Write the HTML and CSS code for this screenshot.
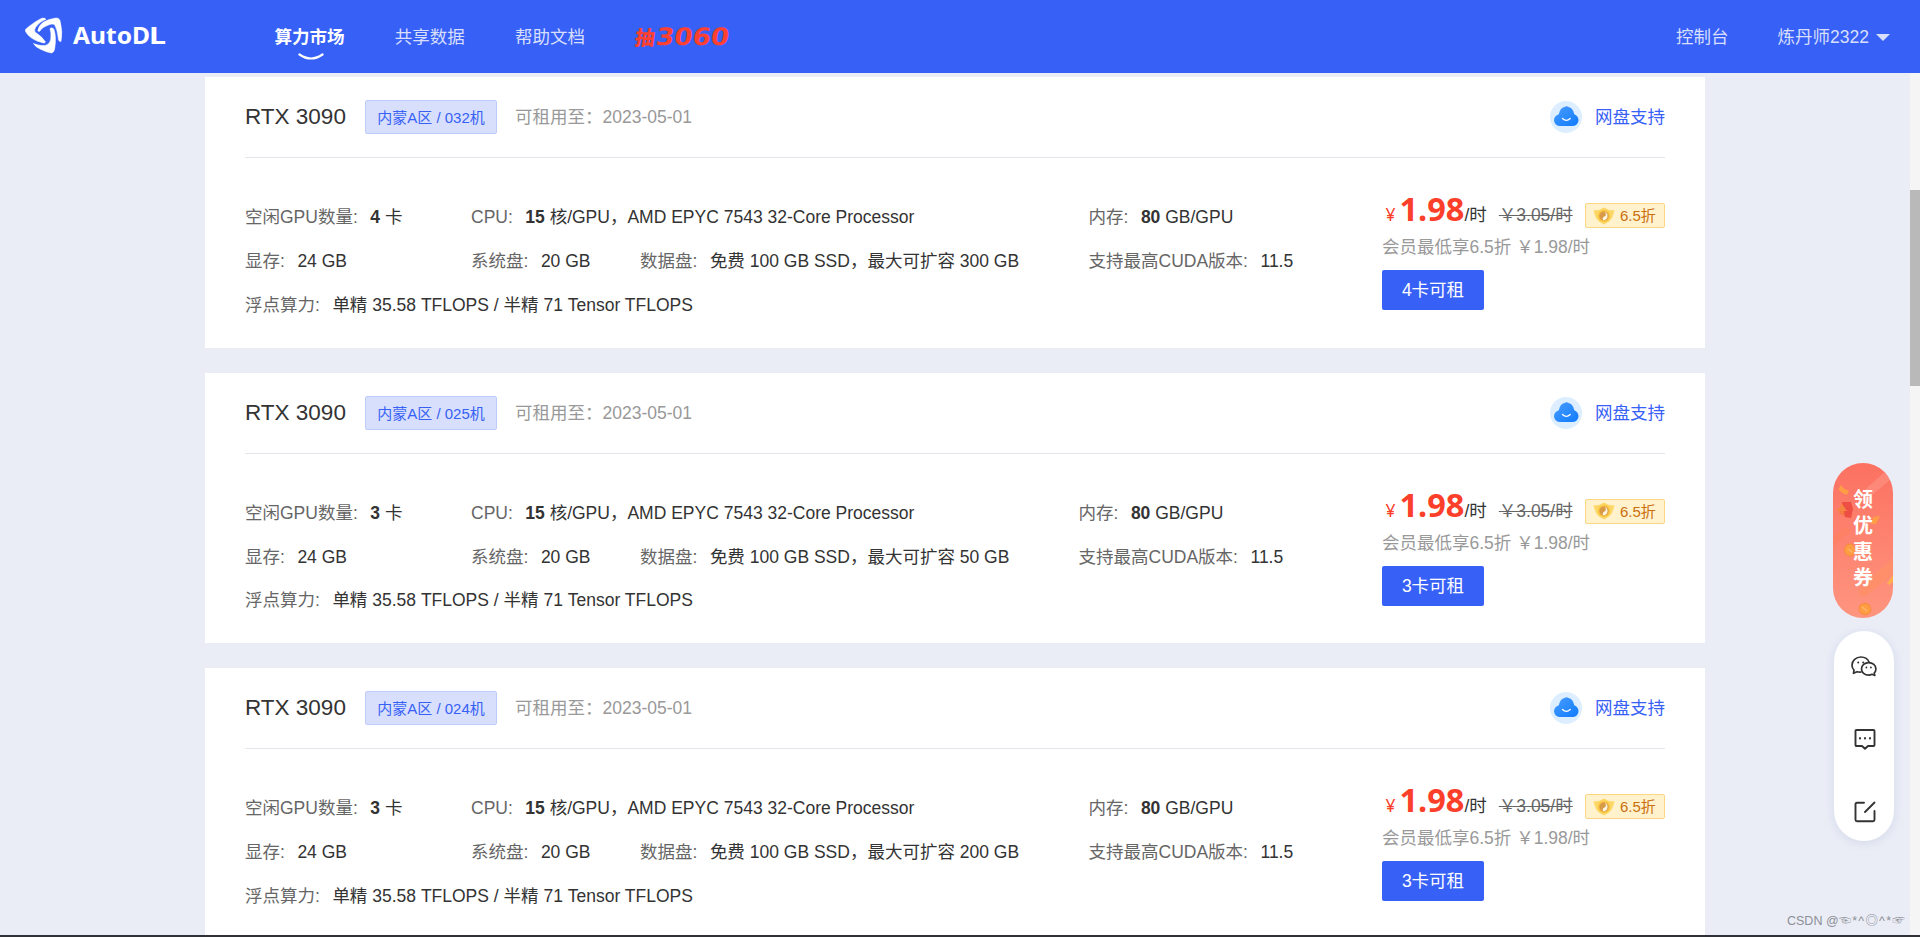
FILE: index.html
```html
<!DOCTYPE html>
<html lang="zh-CN">
<head>
<meta charset="utf-8">
<title>AutoDL</title>
<link rel="stylesheet" href="styles.css">
</head>
<body>
<svg class="defs" width="0" height="0">
  <defs>
    <linearGradient id="cloudFill" x1="0" y1="0" x2="1" y2="1"><stop offset="0" stop-color="#4a9dff"/><stop offset="1" stop-color="#0f7bff"/></linearGradient>
    <linearGradient id="couponFill" x1="0" y1="0" x2="0" y2="1"><stop offset="0" stop-color="#fc7161"/><stop offset="1" stop-color="#fe957f"/></linearGradient>
    <symbol id="cloud" viewBox="0 0 32 32">
      <circle cx="16" cy="16" r="16" fill="#dceeff"/>
      <path d="M9.500 25A5.800 5.800 0 0 1 4 19.200C4 16.200 6 14.200 8.800 13.200Q10 7 14.500 6Q16.500 4.300 18.500 6Q23 7 24.300 13.200C27 14.200 28.500 16.600 28.500 19.200A5.800 5.800 0 0 1 23 25Z" fill="url(#cloudFill)"/>
      <path d="M12.500 17.500Q16.300 21.300 20.200 17.500" fill="none" stroke="#fff" stroke-width="1.300" stroke-linecap="round"/>
    </symbol>
    <symbol id="medal" viewBox="0 0 22 18">
      <path d="M0.500 3.500L6 3L11 0.500L16 3L21.500 3.500L19 11L16 14.500L11 17.500L6 14.500L3 11Z" fill="#fcd765"/>
      <circle cx="11" cy="9" r="6" fill="#f9c23e"/>
      <circle cx="11" cy="9" r="4.600" fill="#d99a48"/>
      <path d="M12 5A4.300 4.300 0 0 1 10 13.200Q9 10.500 11.500 9.500Q14 8.500 12 5Z" fill="#fff6e0"/>
    </symbol>
  </defs>
</svg>

<header class="topbar">
  <svg class="logo" width="150" height="44" viewBox="0 0 150 44">
    <g fill="#fff" stroke="#fff" stroke-width=".5" stroke-linejoin="round">
      <path d="M.3 17C1 15 14 6 17 5.200Q20 4.800 21 6.300Q14 9 10.500 14.500Q9 17 10 19Q17 23.500 20.500 29Q20 30.300 17.500 29.800Q5 26.500 .8 19Q.3 18 .3 17Z"/>
      <path d="M12.800 18Q14 7.500 31 5Q34 4.500 35 7.500Q38 19 36 28.500Q34.500 29 33.500 27Q32.500 17 29.500 11.500Q27 10.500 23.500 12Q17 14 14.500 18.500Z"/>
      <path d="M8.500 30.500Q16 33.500 21 32.200Q25 31 25.800 26Q26.500 20 25 15.500Q27.500 13.500 29 16.500Q31.500 24 29.800 35Q29.300 39.500 26.500 40Q22 39.500 15 36Q10 33.500 8.500 30.500Z"/>
    </g>
    <text class="logo-text" x="48" y="31" textLength="77" lengthAdjust="spacingAndGlyphs">AutoD</text>
    <text class="logo-text" x="124" y="31" textLength="17" lengthAdjust="spacingAndGlyphs">L</text>
  </svg>
  <nav class="nav">
    <a class="nav-item active">算力市场
      <svg class="smile" width="26" height="8" viewBox="0 0 26 8"><path d="M1.500 1.500Q13 9.500 24.500 1.500" fill="none" stroke="#fff" stroke-width="2.200" stroke-linecap="round"/></svg>
    </a>
    <a class="nav-item">共享数据</a>
    <a class="nav-item">帮助文档</a>
    <a class="promo"><svg width="100" height="26" viewBox="0 0 100 26"><g transform="skewX(-8)"><text class="promo-cn" x="3" y="20.500" textLength="20" lengthAdjust="spacingAndGlyphs">抽</text><text class="promo-num" x="24" y="21" textLength="73" lengthAdjust="spacingAndGlyphs">3060</text></g></svg></a>
  </nav>
  <div class="account">
    <a>控制台</a>
    <a class="user">炼丹师2322<i class="caret"></i></a>
  </div>
</header>

<div class="page">
  <main class="list">
    <section class="card">
      <div class="card-head">
        <h2>RTX 3090</h2><span class="tag">内蒙A区 / 032机</span><span class="until">可租用至：2023-05-01</span>
        <a class="disk"><svg width="32" height="32"><use href="#cloud"/></svg>网盘支持</a>
      </div>
      <div class="card-body">
        <div class="specs">
          <div class="col"><p><label>空闲GPU数量:</label><b>4</b> 卡</p><p><label>显存:</label>24 GB</p><p><label>浮点算力:</label>单精 35.58 TFLOPS / 半精 71 Tensor TFLOPS</p></div>
          <div class="col"><p><label>CPU:</label><b>15</b> 核/GPU，AMD EPYC 7543 32-Core Processor</p><p><span class="sys"><label>系统盘:</label>20 GB</span><label>数据盘:</label>免费 100 GB SSD，最大可扩容 300 GB</p></div>
          <div class="col"><p><label>内存:</label><b>80</b> GB/GPU</p><p><label>支持最高CUDA版本:</label>11.5</p></div>
        </div>
        <div class="price">
          <div class="price-row"><span class="yen">¥</span><strong>1.98</strong><span class="unit">/时</span><del>￥3.05/时</del><span class="off"><svg width="22" height="18"><use href="#medal"/></svg>6.5折</span></div>
          <div class="member">会员最低享6.5折 ￥1.98/时</div>
          <button>4卡可租</button>
        </div>
      </div>
    </section>

    <section class="card">
      <div class="card-head">
        <h2>RTX 3090</h2><span class="tag">内蒙A区 / 025机</span><span class="until">可租用至：2023-05-01</span>
        <a class="disk"><svg width="32" height="32"><use href="#cloud"/></svg>网盘支持</a>
      </div>
      <div class="card-body">
        <div class="specs narrow">
          <div class="col"><p><label>空闲GPU数量:</label><b>3</b> 卡</p><p><label>显存:</label>24 GB</p><p><label>浮点算力:</label>单精 35.58 TFLOPS / 半精 71 Tensor TFLOPS</p></div>
          <div class="col"><p><label>CPU:</label><b>15</b> 核/GPU，AMD EPYC 7543 32-Core Processor</p><p><span class="sys"><label>系统盘:</label>20 GB</span><label>数据盘:</label>免费 100 GB SSD，最大可扩容 50 GB</p></div>
          <div class="col"><p><label>内存:</label><b>80</b> GB/GPU</p><p><label>支持最高CUDA版本:</label>11.5</p></div>
        </div>
        <div class="price">
          <div class="price-row"><span class="yen">¥</span><strong>1.98</strong><span class="unit">/时</span><del>￥3.05/时</del><span class="off"><svg width="22" height="18"><use href="#medal"/></svg>6.5折</span></div>
          <div class="member">会员最低享6.5折 ￥1.98/时</div>
          <button>3卡可租</button>
        </div>
      </div>
    </section>

    <section class="card">
      <div class="card-head">
        <h2>RTX 3090</h2><span class="tag">内蒙A区 / 024机</span><span class="until">可租用至：2023-05-01</span>
        <a class="disk"><svg width="32" height="32"><use href="#cloud"/></svg>网盘支持</a>
      </div>
      <div class="card-body">
        <div class="specs">
          <div class="col"><p><label>空闲GPU数量:</label><b>3</b> 卡</p><p><label>显存:</label>24 GB</p><p><label>浮点算力:</label>单精 35.58 TFLOPS / 半精 71 Tensor TFLOPS</p></div>
          <div class="col"><p><label>CPU:</label><b>15</b> 核/GPU，AMD EPYC 7543 32-Core Processor</p><p><span class="sys"><label>系统盘:</label>20 GB</span><label>数据盘:</label>免费 100 GB SSD，最大可扩容 200 GB</p></div>
          <div class="col"><p><label>内存:</label><b>80</b> GB/GPU</p><p><label>支持最高CUDA版本:</label>11.5</p></div>
        </div>
        <div class="price">
          <div class="price-row"><span class="yen">¥</span><strong>1.98</strong><span class="unit">/时</span><del>￥3.05/时</del><span class="off"><svg width="22" height="18"><use href="#medal"/></svg>6.5折</span></div>
          <div class="member">会员最低享6.5折 ￥1.98/时</div>
          <button>3卡可租</button>
        </div>
      </div>
    </section>
  </main>
  <div class="scrollbar"><div class="thumb"></div></div>
</div>
<div class="bottom-edge"></div>

<aside class="floating">
  <div class="coupon">
    <svg class="coupon-art" width="60" height="155" viewBox="0 0 60 155">
      <rect width="60" height="155" rx="30" fill="url(#couponFill)"/>
      <path d="M28 30L52 9L57 17L38 33Z" fill="#ff9485" opacity=".6"/>
      <path d="M0 73L10 65Q17 63 17 69L0 84Z" fill="#fe8065"/>
      <path d="M26 126L60 95V111L34 132Q26 137 26 126Z" fill="#ff8f6b"/>
      <path d="M8 22Q12 28 16 27L14 32Q8 30 5.500 26Z" fill="#ff9d45"/>
      <path d="M9 39L20 44L15 55L6 50Z" fill="#f47b42"/>
      <path d="M9 39L18 39L20 46L18 55L12 54Z" fill="#ee4f45"/>
      <path d="M9 41L14 48L4 48Z" fill="#f78542"/>
      <path d="M40 54L47 53L43 61L38 61Z" fill="#ff9c45"/>
      <path d="M60 112L54 120L56 122L60 119Z" fill="#ffad50"/>
      <g fill="#ff9d45" stroke="#f78c38"><ellipse cx="17" cy="87" rx="5.500" ry="6"/><ellipse cx="32" cy="146" rx="6" ry="5.500" transform="rotate(35 32 146)"/></g>
      <path d="M15 86L19 89M29 144L34 148" stroke="#ffb865" stroke-width="1.500"/>
    </svg>
    <span class="coupon-text">领优惠券</span>
  </div>
  <div class="tools">
    <svg width="26" height="21" viewBox="0 0 26 21" fill="none" stroke="#333" stroke-width="1.700" stroke-linejoin="round">
      <path d="M10.500 16Q8.500 16.400 6 15.700L2.500 17.300L3 14C1.700 12.800 1 11.200 1 9.200C1 4.700 5 1 9.900 1C13.800 1 17 3 18.300 6.500"/>
      <path d="M23.800 19.500L21 18.300C19.800 19 18.800 19.200 17.700 19.200C13.700 19.200 10.500 16.400 10.500 12.900S13.700 6.600 17.700 6.600S24.900 9.400 24.900 12.900C24.900 14.500 24.300 15.900 23.200 17Z"/>
      <g fill="#333" stroke="none"><circle cx="7.200" cy="6.500" r="1"/><circle cx="12.200" cy="6.500" r="1"/><circle cx="15.400" cy="11.500" r=".9"/><circle cx="19.900" cy="11.500" r=".9"/></g>
    </svg>
    <svg class="chat" width="22" height="21" viewBox="0 0 22 21" fill="none" stroke="#333" stroke-width="1.900" stroke-linejoin="round">
      <path d="M2.500 1H19.500Q20.500 1 20.500 2V16Q20.500 17 19.500 17H14L11 19.700L8 17H2.500Q1.500 17 1.500 16V2Q1.500 1 2.500 1Z"/>
      <g fill="#333" stroke="none"><rect x="5" y="8.300" width="2" height="2"/><rect x="10" y="8.300" width="2" height="2"/><rect x="15" y="8.300" width="2" height="2"/></g>
    </svg>
    <svg class="chat" width="22" height="22" viewBox="0 0 22 22" fill="none" stroke="#333" stroke-width="1.900" stroke-linecap="round">
      <path d="M10 1.800H3Q1.500 1.800 1.500 3.300V18.700Q1.500 20.200 3 20.200H19Q20.500 20.200 20.500 18.700V10M11 11L20.500 1.500"/>
    </svg>
  </div>
</aside>
<div class="watermark">CSDN @<span>☜*^◎^*☞</span></div>
</body>
</html>
```

FILE: styles.css
```css
* { box-sizing: border-box; }
html, body { height: 100%; }
body {
  margin: 0;
  display: flex;
  flex-direction: column;
  overflow: hidden;
  background: #eaedf6;
  color: #333;
  font: 400 17.5px/24px "Liberation Sans", "Noto Sans CJK SC", sans-serif;
}
h2, p { margin: 0; }
svg { display: block; flex: none; }
.defs { position: absolute; }

.topbar {
  height: 73px;
  flex: none;
  display: flex;
  align-items: center;
  background: #3761f6;
  color: #d7dffd;
}
.logo { margin-left: 25px; margin-bottom: 3px; }
.logo-text { font: 700 23px "Noto Sans", sans-serif; fill: #fff; }
.nav { display: flex; align-items: center; margin-left: 99.500px; gap: 50.300px; }
.nav-item { position: relative; }
.nav-item.active { color: #fff; font-weight: 700; }
.smile { position: absolute; left: 23px; top: 28px; }
.promo { margin-left: -1px; }
.promo svg { overflow: visible; }
.promo-cn { font: 900 20px "Noto Sans CJK SC", sans-serif; fill: #ff4030; }
.promo-num { font: 700 24px "DejaVu Sans", sans-serif; fill: #ff4030; }
.account { display: flex; margin-left: auto; margin-right: 30px; gap: 49px; }
.user { display: flex; align-items: center; }
.caret {
  margin-left: 7px;
  border: 7px solid transparent;
  border-top-color: #d7dffd;
  border-bottom: 0;
  margin-top: 2px;
}

.page { flex: 1; min-height: 0; display: flex; }
.list {
  flex: 1;
  display: flex;
  flex-direction: column;
  gap: 25px;
  padding: 4.300px 205px 0;
  overflow: hidden;
}
.scrollbar { width: 10px; padding-top: 117px; background: #f5f5f5; }
.thumb { height: 196px; background: #b9b9b9; }
.bottom-edge { height: 2px; flex: none; background: #303136; }

.card {
  flex: none;
  width: 1500px;
  height: 270.500px;
  padding: 0 40px;
  background: #fff;
}
.card-head {
  display: flex;
  align-items: center;
  height: 81px;
  border-bottom: 1px solid #e4e6eb;
}
.card-head h2 { font-weight: 400; font-size: 22.500px; width: 120px; }
.tag {
  width: 132px;
  height: 34px;
  border: 1px solid #bfccfb;
  border-radius: 2px;
  background: #d8dffc;
  color: #3761f6;
  font-size: 15px;
  line-height: 33px;
  text-align: center;
}
.until { margin-left: 18px; color: #999; }
.disk {
  display: flex;
  align-items: center;
  gap: 13px;
  margin-left: auto;
  color: #3761f6;
}
.card-body { display: flex; justify-content: space-between; }
.specs {
  display: grid;
  grid-template-columns: 226px 617.500px 239.500px;
  padding-top: 38px;
}
.specs.narrow { grid-template-columns: 226px 607.500px 239.500px; }
.specs p { height: 43.750px; line-height: 43.750px; white-space: nowrap; }
.specs label { color: #666; margin-right: 12.500px; }
.specs b { font-weight: 700; }
.sys { display: inline-block; width: 169px; }

.price { width: 283px; padding-top: 31px; }
.price-row { display: flex; align-items: baseline; height: 45px; line-height: 44px; white-space: nowrap; }
.yen { width: 17.500px; padding-left: 3.500px; color: #fb3f2a; font-family: "Noto Sans", sans-serif; }
.price-row strong { color: #fb3f2a; font: 700 32.500px/40px "Noto Sans", sans-serif; }
.price-row del { color: #666; margin-left: 12px; }
.off {
  display: flex;
  align-items: center;
  align-self: flex-start;
  gap: 5px;
  width: 80px;
  height: 25px;
  margin-top: 14px;
  margin-left: auto;
  padding-left: 7px;
  border: 1px solid #fbd784;
  border-radius: 2px;
  background: #fff2cc;
  color: #ca6f0c;
  font-size: 15px;
  line-height: 23px;
}
.member { color: #999; height: 24px; padding-top: 1px; }
.price button {
  display: block;
  width: 102px;
  height: 40px;
  margin-top: 12px;
  padding: 0;
  border: 0;
  border-radius: 2px;
  background: #3761f6;
  color: #fff;
  font: inherit;
}

.floating {
  position: absolute;
  left: 1833px;
  top: 463px;
  display: flex;
  flex-direction: column;
  gap: 13px;
}
.coupon { position: relative; width: 60px; height: 155px; }
.coupon-text {
  position: absolute;
  left: 20px;
  top: 23px;
  width: 20px;
  color: #fff;
  font: 700 20px/26px "Noto Sans CJK SC", sans-serif;
}
.tools {
  display: flex;
  flex-direction: column;
  align-items: center;
  justify-content: space-between;
  width: 60px;
  height: 210px;
  margin-left: 1px;
  padding: 25px 0 18px;
  border-radius: 30px;
  background: #fff;
  box-shadow: 0 2px 10px rgba(80, 100, 160, .14);
}
.chat { margin-left: 1px; }
.watermark {
  position: absolute;
  left: 1787px;
  top: 912px;
  width: 118px;
  color: #8d8f96;
  font-size: 12.500px;
  line-height: 18px;
  white-space: nowrap;
}
.watermark span { letter-spacing: 1.200px; }
```
